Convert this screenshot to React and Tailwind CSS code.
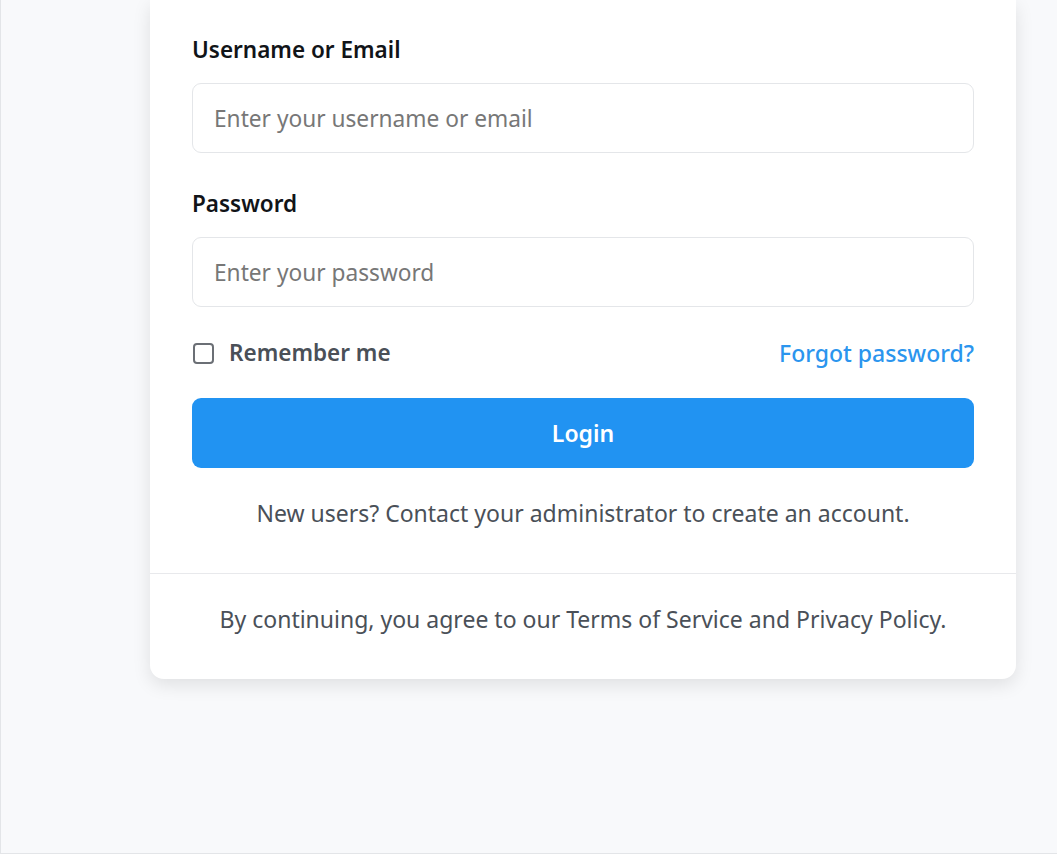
import { useState } from "react";

function App() {
  const [form, setForm] = useState({ username: "", password: "", remember: false });

  const handleChange = (e) => {
    const { name, value, type, checked } = e.target;
    setForm({ ...form, [name]: type === "checkbox" ? checked : value });
  };

  return (
    <div
      className="min-h-[854px] h-[854px] bg-[#f8f9fb] border-l border-b border-[#e3e5e8] overflow-hidden"
      style={{ fontFamily: '"Noto Sans", "Open Sans", sans-serif' }}
    >
      <div className="ml-[149px] w-[866px] bg-white rounded-b-[14px] shadow-[0_6px_18px_rgba(0,0,0,0.10)]">
        <div className="px-[42px] pt-[35px] pb-[45px]">
          <label className="block text-[22.5px] leading-[30px] font-semibold text-[#111418]">
            Username or Email
          </label>
          <input
            type="text"
            name="username"
            value={form.username}
            onChange={handleChange}
            placeholder="Enter your username or email"
            className="mt-[18px] w-full h-[70px] px-[21px] text-[22.7px] text-[#222] placeholder:text-[#777] border border-[#e4e6e9] rounded-[9px] outline-none"
          />

          <label className="block mt-[36px] text-[22.5px] leading-[30px] font-semibold text-[#111418]">
            Password
          </label>
          <input
            type="password"
            name="password"
            value={form.password}
            onChange={handleChange}
            placeholder="Enter your password"
            className="mt-[18px] w-full h-[70px] px-[21px] text-[22.7px] text-[#222] placeholder:text-[#777] border border-[#e4e6e9] rounded-[9px] outline-none"
          />

          <div className="mt-[31px] flex items-center justify-between h-[30px]">
            <label className="flex items-center gap-[15px] text-[22.5px] font-semibold text-[#4a5058]">
              <input
                type="checkbox"
                name="remember"
                checked={form.remember}
                onChange={handleChange}
                className="appearance-none w-[21px] h-[21px] border-2 border-[#6b6f75] rounded-[4px] ml-[1px]"
              />
              Remember me
            </label>
            <a href="#" className="text-[23px] font-medium text-[#2b95ee]">
              Forgot password?
            </a>
          </div>

          <button
            type="submit"
            className="mt-[30px] w-full h-[70px] bg-[#2193f2] text-white text-[23px] font-semibold rounded-[9px]"
          >
            Login
          </button>

          <p className="mt-[30px] text-center text-[23px] leading-[30px] text-[#4a5058]">
            New users? Contact your administrator to create an account.
          </p>
        </div>
        <div className="border-t border-[#e8e9ec] pt-[30px] pb-[45px] text-center text-[23px] leading-[30px] text-[#4a5058]">
          By continuing, you agree to our Terms of Service and Privacy Policy.
        </div>
      </div>
    </div>
  );
}

export default App;
